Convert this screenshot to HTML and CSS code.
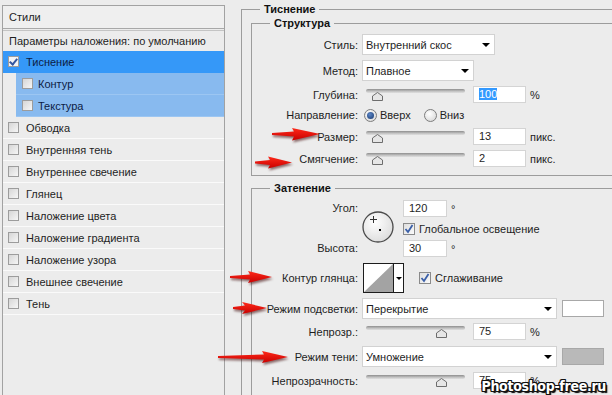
FILE: index.html
```html
<!DOCTYPE html>
<html>
<head>
    <meta charset="utf-8">
    <title>Стиль слоя — Тиснение</title>
    <link rel="stylesheet" href="styles.css">
</head>
<body>
<div class="dialog">
    <div class="styles-panel">
        <div class="panel-head">Стили</div>
        <div class="blend-row">Параметры наложения: по умолчанию</div>
        <div class="style-row selected"><span class="cb checked"></span>Тиснение</div>
        <div class="style-row sub"><span class="cb"></span>Контур</div>
        <div class="style-row sub"><span class="cb"></span>Текстура</div>
        <div class="style-row"><span class="cb"></span>Обводка</div>
        <div class="style-row"><span class="cb"></span>Внутренняя тень</div>
        <div class="style-row"><span class="cb"></span>Внутреннее свечение</div>
        <div class="style-row"><span class="cb"></span>Глянец</div>
        <div class="style-row"><span class="cb"></span>Наложение цвета</div>
        <div class="style-row"><span class="cb"></span>Наложение градиента</div>
        <div class="style-row"><span class="cb"></span>Наложение узора</div>
        <div class="style-row"><span class="cb"></span>Внешнее свечение</div>
        <div class="style-row"><span class="cb"></span>Тень</div>
    </div>

    <div class="settings">
        <fieldset class="group outer">
            <legend>Тиснение</legend>

            <fieldset class="group struct">
                <legend>Структура</legend>
                <div class="field mt4">
                    <label>Стиль:</label>
                    <div class="select w133">Внутренний скос<span class="arrow"></span></div>
                </div>
                <div class="field mt5">
                    <label>Метод:</label>
                    <div class="select w112">Плавное<span class="arrow"></span></div>
                </div>
                <div class="field h17 mt5">
                    <label>Глубина:</label>
                    <div class="slider"><div class="track"></div><svg class="thumb" style="left:6px" width="11" height="9"><path d="M0.5 8.5V4L5.5 0.5 10.5 4V8.5Z"/></svg></div>
                    <div class="num"><span class="hl">100</span></div>
                    <span class="unit">%</span>
                </div>
                <div class="field mt3 h18">
                    <label>Направление:</label>
                    <span class="radio on"></span><span class="radio-text">Вверх</span>
                    <span class="radio"></span><span class="radio-text">Вниз</span>
                </div>
                <div class="field h17 mt4">
                    <label>Размер:</label>
                    <div class="slider"><div class="track"></div><svg class="thumb" style="left:6px" width="11" height="9"><path d="M0.5 8.5V4L5.5 0.5 10.5 4V8.5Z"/></svg></div>
                    <div class="num">13</div>
                    <span class="unit">пикс.</span>
                </div>
                <div class="field h17 mt5">
                    <label>Смягчение:</label>
                    <div class="slider"><div class="track"></div><svg class="thumb" style="left:6px" width="11" height="9"><path d="M0.5 8.5V4L5.5 0.5 10.5 4V8.5Z"/></svg></div>
                    <div class="num">2</div>
                    <span class="unit">пикс.</span>
                </div>
            </fieldset>

            <fieldset class="group shade">
                <legend>Затенение</legend>
                <div class="angle-block">
                    <div class="angle-labels">
                        <label>Угол:</label>
                        <label>Высота:</label>
                    </div>
                    <svg class="dial" width="32" height="32">
                        <defs>
                            <radialGradient id="dialFill" cx="40%" cy="35%" r="70%">
                                <stop offset="0" stop-color="#ffffff"/>
                                <stop offset="1" stop-color="#dcdcdc"/>
                            </radialGradient>
                        </defs>
                        <circle cx="16" cy="16" r="15" fill="url(#dialFill)" stroke="#4a4a4a" stroke-width="1.3"/>
                        <path d="M11.5 5v7M8 8.5h7" stroke="#333" stroke-width="1"/>
                        <rect x="17" y="18" width="2" height="2" fill="#000"/>
                    </svg>
                    <div class="angle-values">
                        <div class="value-row"><div class="num short">120</div><span class="unit">°</span></div>
                        <div class="value-row"><span class="check on"><svg width="10" height="10"><path d="M1.5 5l2.5 3 4.5-7" fill="none" stroke="#3a5fa8" stroke-width="1.8"/></svg></span><span class="check-text">Глобальное освещение</span></div>
                        <div class="value-row"><div class="num short">30</div><span class="unit">°</span></div>
                    </div>
                </div>
                <div class="field mt6 h30">
                    <label>Контур глянца:</label>
                    <div class="contour">
                        <svg width="29" height="28"><polygon points="0,28 29,0 29,28" fill="#a3a3a3"/></svg>
                        <span class="contour-drop"><span class="arrow"></span></span>
                    </div>
                    <span class="check on anti"><svg width="10" height="10"><path d="M1.5 5l2.5 3 4.5-7" fill="none" stroke="#3a5fa8" stroke-width="1.8"/></svg></span><span class="check-text">Сглаживание</span>
                </div>
                <div class="field mt5">
                    <label>Режим подсветки:</label>
                    <div class="select w195">Перекрытие<span class="arrow"></span></div>
                    <span class="swatch white"></span>
                </div>
                <div class="field h17 mt4">
                    <label>Непрозр.:</label>
                    <div class="slider"><div class="track"></div><svg class="thumb" style="left:70px" width="11" height="9"><path d="M0.5 8.5V4L5.5 0.5 10.5 4V8.5Z"/></svg></div>
                    <div class="num">75</div>
                    <span class="unit">%</span>
                </div>
                <div class="field mt6">
                    <label>Режим тени:</label>
                    <div class="select w195">Умножение<span class="arrow"></span></div>
                    <span class="swatch grey"></span>
                </div>
                <div class="field h17 mt5">
                    <label>Непрозрачность:</label>
                    <div class="slider"><div class="track"></div><svg class="thumb" style="left:70px" width="11" height="9"><path d="M0.5 8.5V4L5.5 0.5 10.5 4V8.5Z"/></svg></div>
                    <div class="num">75</div>
                    <span class="unit">%</span>
                </div>
            </fieldset>
        </fieldset>
    </div>
</div>

<!-- красные стрелки поверх диалога -->
<svg class="arrows" width="612" height="395">
    <defs>
        <filter id="shadow" x="-20%" y="-50%" width="140%" height="200%">
            <feGaussianBlur stdDeviation="1.2"/>
        </filter>
        <linearGradient id="red" x1="0" y1="0" x2="0" y2="1">
            <stop offset="0" stop-color="#ff2a1a"/>
            <stop offset="1" stop-color="#c80000"/>
        </linearGradient>
    </defs>
    <g class="arrow-shadow" filter="url(#shadow)" transform="translate(1,2)">
        <polygon points="272,133 294,131.5 292,128 320,134 292,140.5 294,136.5 272,135"/>
        <polygon points="255,161.5 270,160 268,156.5 292,162.5 268,168.5 270,165 255,163.5"/>
        <polygon points="230,276 250,274.5 248,271 272,277 248,283 250,279.5 230,278"/>
        <polygon points="233,307 245,305.5 242,302 267,308 242,314 245,310.5 233,309"/>
        <polygon points="218,356 264,354.5 262,351 288,357 262,363 264,359.5 218,358"/>
    </g>
    <g fill="url(#red)">
        <polygon points="272,133 294,131.5 292,128 320,134 292,140.5 294,136.5 272,135"/>
        <polygon points="255,161.5 270,160 268,156.5 292,162.5 268,168.5 270,165 255,163.5"/>
        <polygon points="230,276 250,274.5 248,271 272,277 248,283 250,279.5 230,278"/>
        <polygon points="233,307 245,305.5 242,302 267,308 242,314 245,310.5 233,309"/>
        <polygon points="218,356 264,354.5 262,351 288,357 262,363 264,359.5 218,358"/>
    </g>
</svg>

<div class="watermark">Photoshop-free.ru</div>
</body>
</html>
```

FILE: styles.css
```css
body {
    margin: 0;
    width: 612px;
    height: 395px;
    overflow: hidden;
    background-color: #ececec;
    font-family: "Liberation Sans", Arial, sans-serif;
    font-size: 11px;
    color: #1e1e1e;
    position: relative;
}
.dialog {
    display: flex;
    align-items: flex-start;
    height: 395px;
    overflow: hidden;
}

/* левая панель со списком стилей */
.styles-panel {
    margin: 5px 0 0 2px;
    width: 221px;
    height: 400px;
    border: 1px solid #a2a2a2;
    background-color: #ececec;
    flex: none;
}
.panel-head {
    height: 22px;
    line-height: 22px;
    padding-left: 6px;
    border-bottom: 1px solid #a8a8a8;
    background-color: #efefef;
}
.blend-row {
    margin-top: 1px;
    height: 20px;
    line-height: 20px;
    padding-left: 6px;
    border-top: 1px solid #c4c4c4;
}
.style-row {
    height: 21px;
    border-bottom: 1px solid #fafafa;
    display: flex;
    align-items: center;
    padding-left: 5px;
}
.style-row.selected {
    background-color: #3598f8;
    border-bottom-color: #3598f8;
    color: #0d1c45;
}
.style-row.sub {
    margin-left: 13px;
    padding-left: 6px;
    background-color: #88baef;
    border-bottom-color: #9cc6f2;
    color: #0d1c45;
}
.cb {
    width: 9px;
    height: 9px;
    border: 1px solid #9c9c9c;
    background: linear-gradient(135deg, #d6d6d6, #f6f6f6);
    margin-right: 7px;
    position: relative;
}
.style-row.sub .cb {
    margin-right: 5px;
}
.cb.checked {
    background: #f4f4f4;
}
.cb.checked::after {
    content: "";
    position: absolute;
    left: 2px;
    top: 0;
    width: 3px;
    height: 6px;
    border: solid #3557a0;
    border-width: 0 2px 2px 0;
    transform: rotate(40deg);
}

/* правая часть: группы параметров */
.settings {
    margin: 3px 0 0 16px;
    flex: 1;
    overflow: hidden;
}
.group {
    margin: 0;
    padding: 0;
    border: none;
    border-top: 1px solid #9c9c9c;
    border-left: 1px solid #9c9c9c;
    min-width: 0;
}
.group legend {
    font-weight: bold;
    line-height: 13px;
    padding: 0 4px;
    color: #111;
}
.outer {
    padding-left: 9px;
    height: 400px;
}
.outer > legend {
    margin-left: 9px;
}
.struct {
    margin-top: 1px;
    padding-bottom: 8px;
    border-bottom: 1px solid #9c9c9c;
}
.struct > legend,
.shade > legend {
    margin-left: 18px;
}
.shade {
    margin-top: 6px;
    height: 220px;
}

.field {
    display: flex;
    align-items: center;
    height: 21px;
}
.field.h17 { height: 17px; }
.field.h18 { height: 18px; }
.field.h30 { height: 30px; }
.mt3 { margin-top: 3px; }
.mt4 { margin-top: 4px; }
.mt5 { margin-top: 5px; }
.mt6 { margin-top: 6px; }
.field label,
.angle-labels label {
    width: 106px;
    text-align: right;
    flex: none;
    margin-right: 4px;
}

.select {
    height: 21px;
    box-sizing: border-box;
    border: 1px solid #d2d2d2;
    background-color: #fff;
    display: flex;
    align-items: center;
    justify-content: space-between;
    padding: 0 4px 0 3px;
}
.w133 { width: 133px; }
.w112 { width: 112px; }
.w195 { width: 195px; }
.arrow {
    width: 0;
    height: 0;
    border-left: 4px solid transparent;
    border-right: 4px solid transparent;
    border-top: 4px solid #000;
}

.slider {
    position: relative;
    width: 99px;
    height: 17px;
    margin-left: 4px;
}
.track {
    position: absolute;
    left: 0;
    right: 0;
    top: 3px;
    height: 4px;
    border-radius: 3px;
    background: linear-gradient(#8e8e8e, #c4c4c4 60%, #e0e0e0);
}
.thumb {
    position: absolute;
    top: 6px;
}
.thumb path {
    fill: #e6e6e6;
    stroke: #6d6d6d;
}
.num {
    width: 53px;
    height: 17px;
    box-sizing: border-box;
    border: 1px solid #d4d4d4;
    background-color: #fff;
    padding-left: 5px;
    line-height: 15px;
    margin-left: 8px;
}
.num.short {
    width: 44px;
    margin-left: 0;
}
.hl {
    background-color: #3399ff;
    color: #fff;
}
.unit {
    margin-left: 4px;
}

.radio {
    width: 11px;
    height: 11px;
    border-radius: 50%;
    border: 1px solid #7d7d7d;
    background: radial-gradient(circle at 40% 35%, #fff, #d2d2d2);
    margin-left: 2px;
    position: relative;
}
.radio.on::after {
    content: "";
    position: absolute;
    left: 2px;
    top: 2px;
    width: 7px;
    height: 7px;
    border-radius: 50%;
    background: radial-gradient(circle at 40% 35%, #5c86c6, #17386e);
}
.radio-text {
    margin-left: 3px;
    margin-right: 11px;
}

.angle-block {
    display: flex;
    margin-top: 5px;
    height: 57px;
}
.angle-labels {
    display: flex;
    flex-direction: column;
    justify-content: space-between;
    line-height: 17px;
}
.dial {
    margin: 11px 9px 0 0;
    flex: none;
}
.angle-values {
    display: flex;
    flex-direction: column;
    gap: 3px;
}
.value-row {
    display: flex;
    align-items: center;
    height: 17px;
}
.check {
    width: 10px;
    height: 10px;
    border: 1px solid #8a8a8a;
    background: linear-gradient(135deg, #dedede, #fafafa);
    display: inline-flex;
}
.check-text {
    margin-left: 4px;
}
.check.anti {
    margin-left: 15px;
}

.contour {
    display: flex;
    height: 30px;
    width: 41px;
    box-sizing: border-box;
    border: 1px solid #1c1c1c;
    background-color: #fff;
    margin-left: 1px;
}
.contour svg {
    display: block;
}
.contour-drop {
    flex: 1;
    border-left: 1px solid #1c1c1c;
    display: flex;
    align-items: center;
    justify-content: center;
}
.contour-drop .arrow {
    border-left-width: 3px;
    border-right-width: 3px;
    border-top-width: 3px;
}

.swatch {
    width: 42px;
    height: 17px;
    box-sizing: border-box;
    border: 1px solid #a8a8a8;
    margin-left: 5px;
}
.swatch.white { background-color: #fff; }
.swatch.grey { background-color: #b9b9b9; }

/* оверлеи */
.arrows {
    position: absolute;
    left: 0;
    top: 0;
    pointer-events: none;
}
.arrow-shadow {
    fill: rgba(60, 0, 0, 0.55);
}
.watermark {
    position: absolute;
    right: 6px;
    bottom: 1px;
    font-family: "DejaVu Sans Condensed", "DejaVu Sans", sans-serif;
    font-stretch: condensed;
    font-weight: bold;
    font-size: 14px;
    letter-spacing: -0.3px;
    color: #fff;
    text-shadow: 1px 0 0 #111, -1px 0 0 #111, 0 1px 0 #111, 0 -1px 0 #111,
        1px 1px 0 #111, -1px -1px 0 #111, 1px -1px 0 #111, -1px 1px 0 #111, 2px 2px 1px #000;
}
```
